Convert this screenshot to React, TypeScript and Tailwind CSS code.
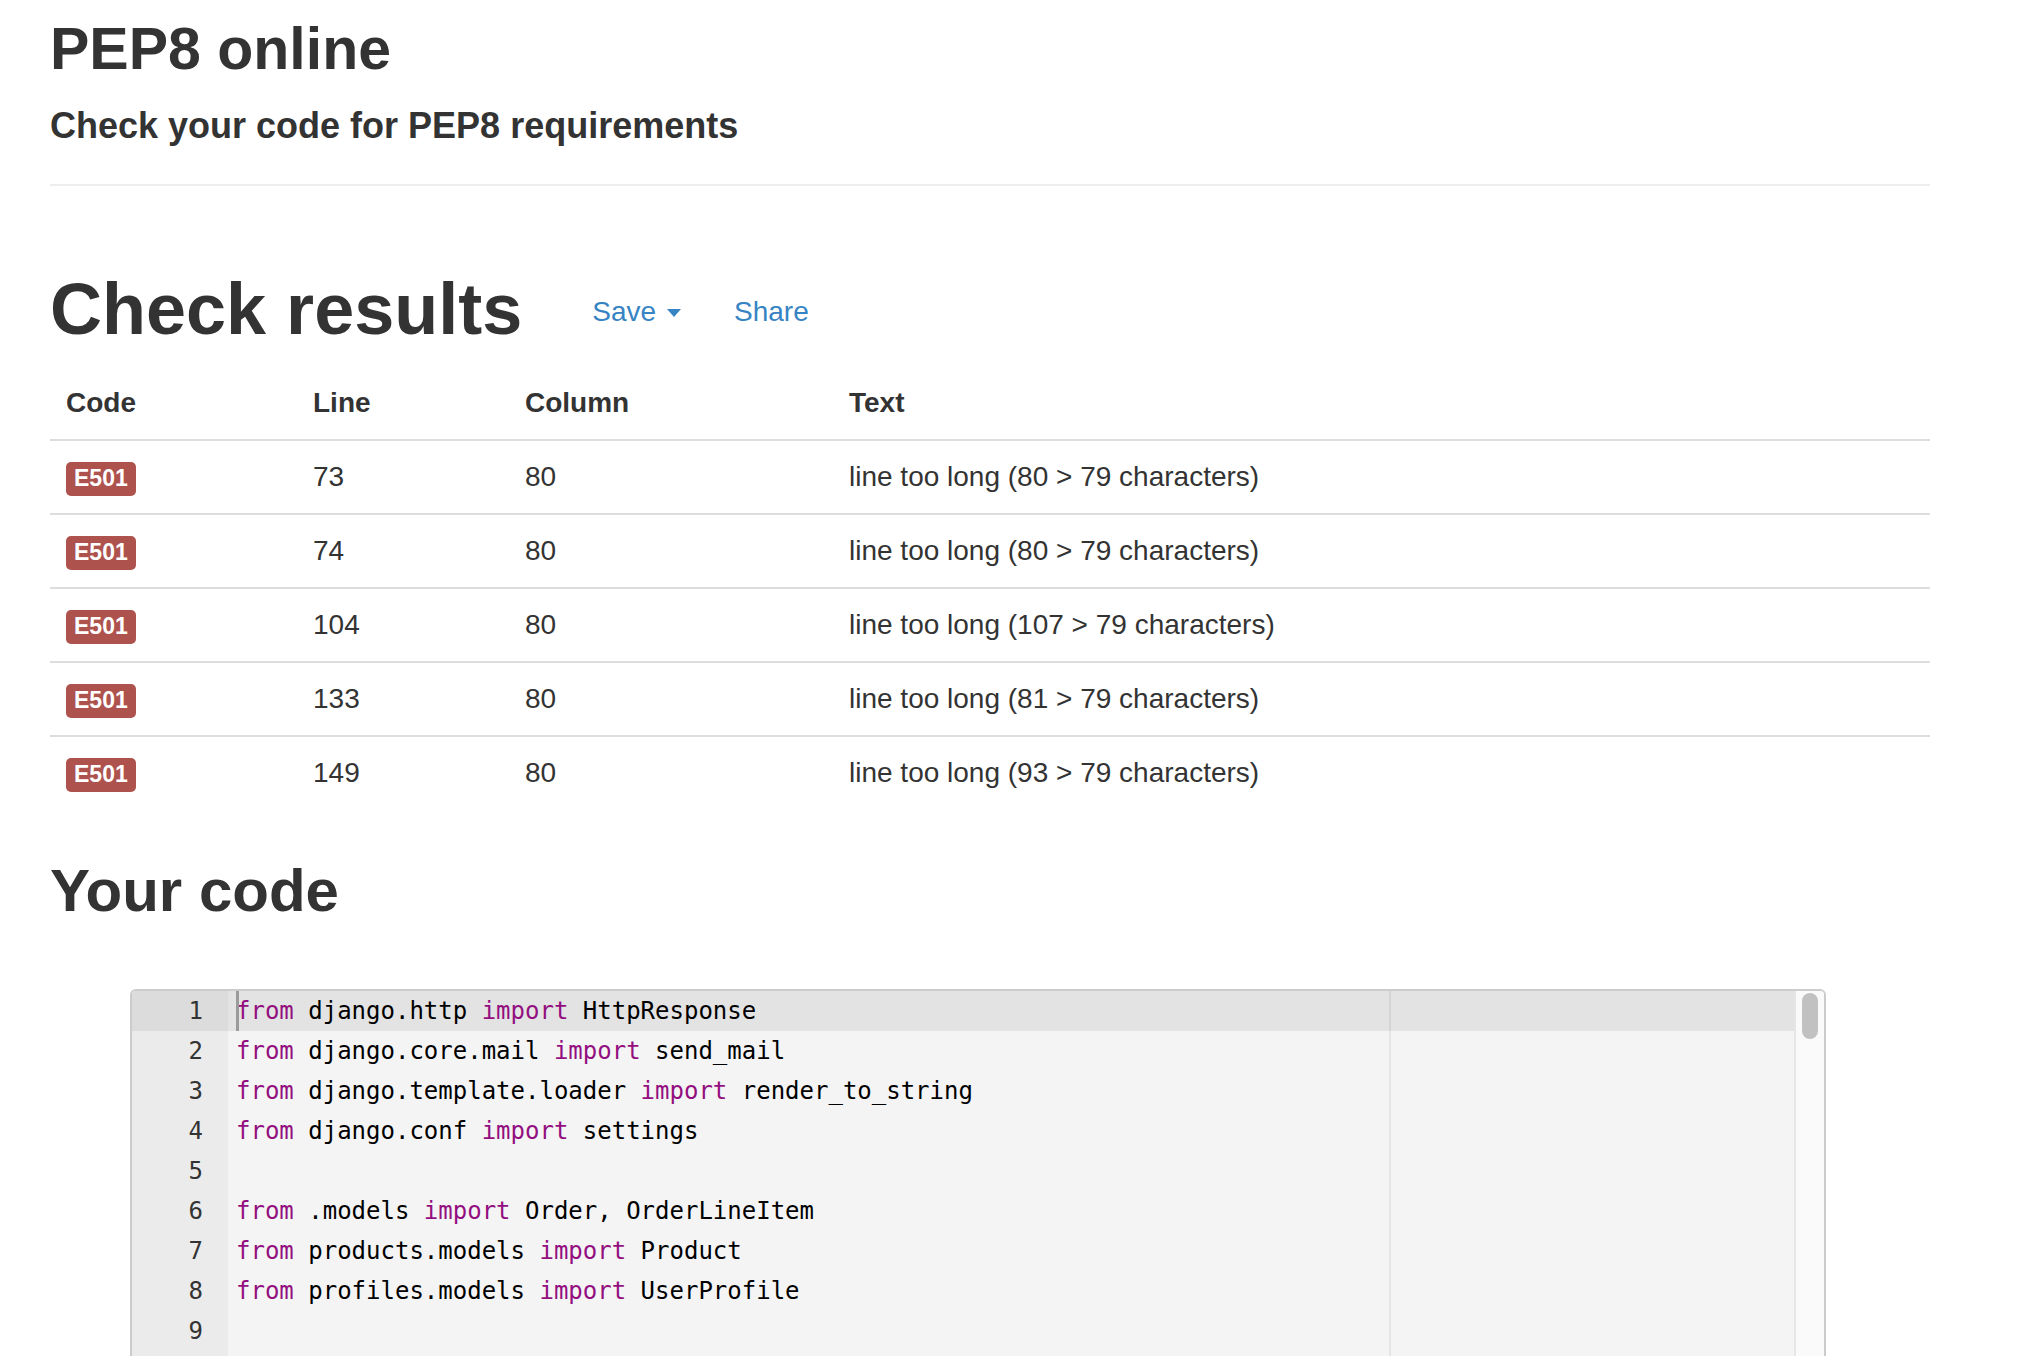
import React from "react";

type Seg = { t: string; k?: boolean };

const rows: [string, string, string][] = [
  ["73", "80", "line too long (80 > 79 characters)"],
  ["74", "80", "line too long (80 > 79 characters)"],
  ["104", "80", "line too long (107 > 79 characters)"],
  ["133", "80", "line too long (81 > 79 characters)"],
  ["149", "80", "line too long (93 > 79 characters)"],
];

const imp = (mod: string, names: string): Seg[] => [
  { t: "from", k: true },
  { t: ` ${mod} ` },
  { t: "import", k: true },
  { t: ` ${names}` },
];

const code: Seg[][] = [
  imp("django.http", "HttpResponse"),
  imp("django.core.mail", "send_mail"),
  imp("django.template.loader", "render_to_string"),
  imp("django.conf", "settings"),
  [],
  imp(".models", "Order, OrderLineItem"),
  imp("products.models", "Product"),
  imp("profiles.models", "UserProfile"),
  [],
];

export default function App() {
  return (
    <div className="h-[1356px] overflow-hidden bg-white text-[#333] font-['Liberation_Sans',Arial,sans-serif]">
      <div className="pl-[50px] w-[1930px]">
        <h2 className="pt-[16px] text-[59px] leading-[66px] font-bold">PEP8 online</h2>
        <h4 className="mt-[24px] text-[36px] leading-[40px] font-bold">
          Check your code for PEP8 requirements
        </h4>
        <div className="mt-[38px] h-[2px] bg-[#eeeeee]" />

        <div className="mt-[83px] flex items-start">
          <h1 className="text-[72px] leading-[80px] font-bold">Check results</h1>
          <div className="ml-[70px] mt-[23px] flex items-center text-[28px] leading-[40px] text-[#3784c4]">
            <span>Save</span>
            <span className="ml-[11px] mt-[2px] w-0 h-0 border-x-[7px] border-x-transparent border-t-[8px] border-t-[#3784c4]" />
            <span className="ml-[53px]">Share</span>
          </div>
        </div>

        <div className="mt-[18px] text-[28px] leading-[40px]">
          <div className="grid grid-cols-[247px_212px_324px_1fr] border-b-2 border-[#dddddd] font-bold">
            <div className="p-[16px]">Code</div>
            <div className="p-[16px]">Line</div>
            <div className="p-[16px]">Column</div>
            <div className="p-[16px]">Text</div>
          </div>
          {rows.map((r, i) => (
            <div
              key={i}
              className={
                "grid grid-cols-[247px_212px_324px_1fr] " +
                (i > 0 ? "border-t-2 border-[#dddddd]" : "")
              }
            >
              <div className="p-[16px]">
                <span className="inline-flex h-[34px] items-center px-[8px] rounded-[5px] bg-[#ae524e] text-white font-bold text-[23px] leading-none">
                  E501
                </span>
              </div>
              <div className="p-[16px]">{r[0]}</div>
              <div className="p-[16px]">{r[1]}</div>
              <div className="p-[16px]">{r[2]}</div>
            </div>
          ))}
        </div>

        <h2 className="mt-[49px] text-[60px] leading-[66px] font-bold">Your code</h2>
      </div>

      <div className="mt-[65px] ml-[130px] w-[1696px] h-[420px] border-2 border-[#cccccc] rounded-[6px] overflow-hidden bg-[#f4f4f4] flex font-['DejaVu_Sans_Mono',monospace] text-[24px] leading-[40px]">
        <div className="w-[96px] shrink-0 bg-[#ebebeb] text-[#333]">
          {code.map((_, i) => (
            <div
              key={i}
              className={"h-[40px] text-right pr-[25px] " + (i === 0 ? "bg-[#dcdcdc]" : "")}
            >
              {i + 1}
            </div>
          ))}
        </div>
        <div className="relative flex-1 text-black">
          {code.map((line, i) => (
            <div
              key={i}
              className={"relative h-[40px] pl-[8px] whitespace-pre " + (i === 0 ? "bg-[#e3e3e3]" : "")}
            >
              {i === 0 && (
                <span className="absolute left-[8px] top-0 h-[40px] w-[3px] bg-[#9a9a9a]" />
              )}
              {line.map((s, j) => (
                <span key={j} className={s.k ? "text-[#930f80]" : ""}>
                  {s.t}
                </span>
              ))}
            </div>
          ))}
          <div className="absolute top-0 bottom-0 left-[1161px] w-[2px] bg-black/[0.06]" />
        </div>
        <div className="w-[30px] shrink-0 bg-[#fafafa] border-l-2 border-[#e6e6e6]">
          <div className="mx-auto mt-[2px] w-[16px] h-[46px] rounded-full bg-[#c1c1c1]" />
        </div>
      </div>
    </div>
  );
}
